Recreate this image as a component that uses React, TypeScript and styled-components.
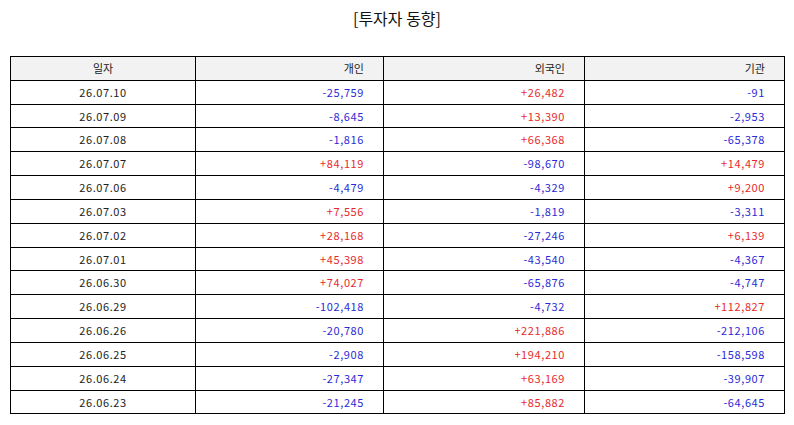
import React from "react";
import styled, { createGlobalStyle } from "styled-components";

const Global = createGlobalStyle`
  html, body { margin: 0; padding: 0; background: #fff; }
  body { font-family: "Noto Sans CJK KR", "Noto Sans", sans-serif; }
`;

const Page = styled.div`
  width: 794px;
  height: 425px;
  padding: 6px 10px 0 10px;
  box-sizing: border-box;
  display: flex;
  flex-direction: column;
  align-items: stretch;
`;

const Title = styled.div`
  text-align: center;
  font-size: 16px;
  line-height: 24px;
  color: #111;
  height: 50px;
`;

const Table = styled.table`
  border-collapse: collapse;
  table-layout: fixed;
  width: 774px;
  font-size: 11px;
  letter-spacing: 0.6px;
  color: #222;
`;

const Col = styled.col<{ $w: number }>`
  width: ${(p) => p.$w}px;
`;

type Tone = "pos" | "neg" | "plain";

const toneColor: Record<Tone, string> = {
  pos: "#e8292b",
  neg: "#2a2ad6",
  plain: "#222",
};

const Cell = styled.td<{ $align: "center" | "right"; $tone?: Tone }>`
  border: 1px solid #000;
  height: 22.83px;
  padding: ${(p) => (p.$align === "center" ? "0 4px" : "0 19px 0 4px")};
  text-align: ${(p) => p.$align};
  color: ${(p) => toneColor[p.$tone ?? "plain"]};
  white-space: nowrap;
  line-height: 1;
`;

const HeadCell = styled(Cell).attrs({ as: "th" })`
  background: #f2f2f2;
  font-weight: normal;
  letter-spacing: 0;
`;

const rows: [string, string, string, string][] = [
  ["26.07.10", "-25,759", "+26,482", "-91"],
  ["26.07.09", "-8,645", "+13,390", "-2,953"],
  ["26.07.08", "-1,816", "+66,368", "-65,378"],
  ["26.07.07", "+84,119", "-98,670", "+14,479"],
  ["26.07.06", "-4,479", "-4,329", "+9,200"],
  ["26.07.03", "+7,556", "-1,819", "-3,311"],
  ["26.07.02", "+28,168", "-27,246", "+6,139"],
  ["26.07.01", "+45,398", "-43,540", "-4,367"],
  ["26.06.30", "+74,027", "-65,876", "-4,747"],
  ["26.06.29", "-102,418", "-4,732", "+112,827"],
  ["26.06.26", "-20,780", "+221,886", "-212,106"],
  ["26.06.25", "-2,908", "+194,210", "-158,598"],
  ["26.06.24", "-27,347", "+63,169", "-39,907"],
  ["26.06.23", "-21,245", "+85,882", "-64,645"],
];

const tone = (v: string): Tone => (v.startsWith("+") ? "pos" : "neg");
const widths = [185, 188, 201, 200];

export default function App() {
  return (
    <Page>
      <Global />
      <Title>[투자자 동향]</Title>
      <Table>
        <colgroup>
          {widths.map((w, i) => (
            <Col key={i} $w={w} />
          ))}
        </colgroup>
        <thead>
          <tr>
            <HeadCell $align="center">일자</HeadCell>
            <HeadCell $align="right">개인</HeadCell>
            <HeadCell $align="right">외국인</HeadCell>
            <HeadCell $align="right">기관</HeadCell>
          </tr>
        </thead>
        <tbody>
          {rows.map((r) => (
            <tr key={r[0]}>
              <Cell $align="center">{r[0]}</Cell>
              <Cell $align="right" $tone={tone(r[1])}>{r[1]}</Cell>
              <Cell $align="right" $tone={tone(r[2])}>{r[2]}</Cell>
              <Cell $align="right" $tone={tone(r[3])}>{r[3]}</Cell>
            </tr>
          ))}
        </tbody>
      </Table>
    </Page>
  );
}
